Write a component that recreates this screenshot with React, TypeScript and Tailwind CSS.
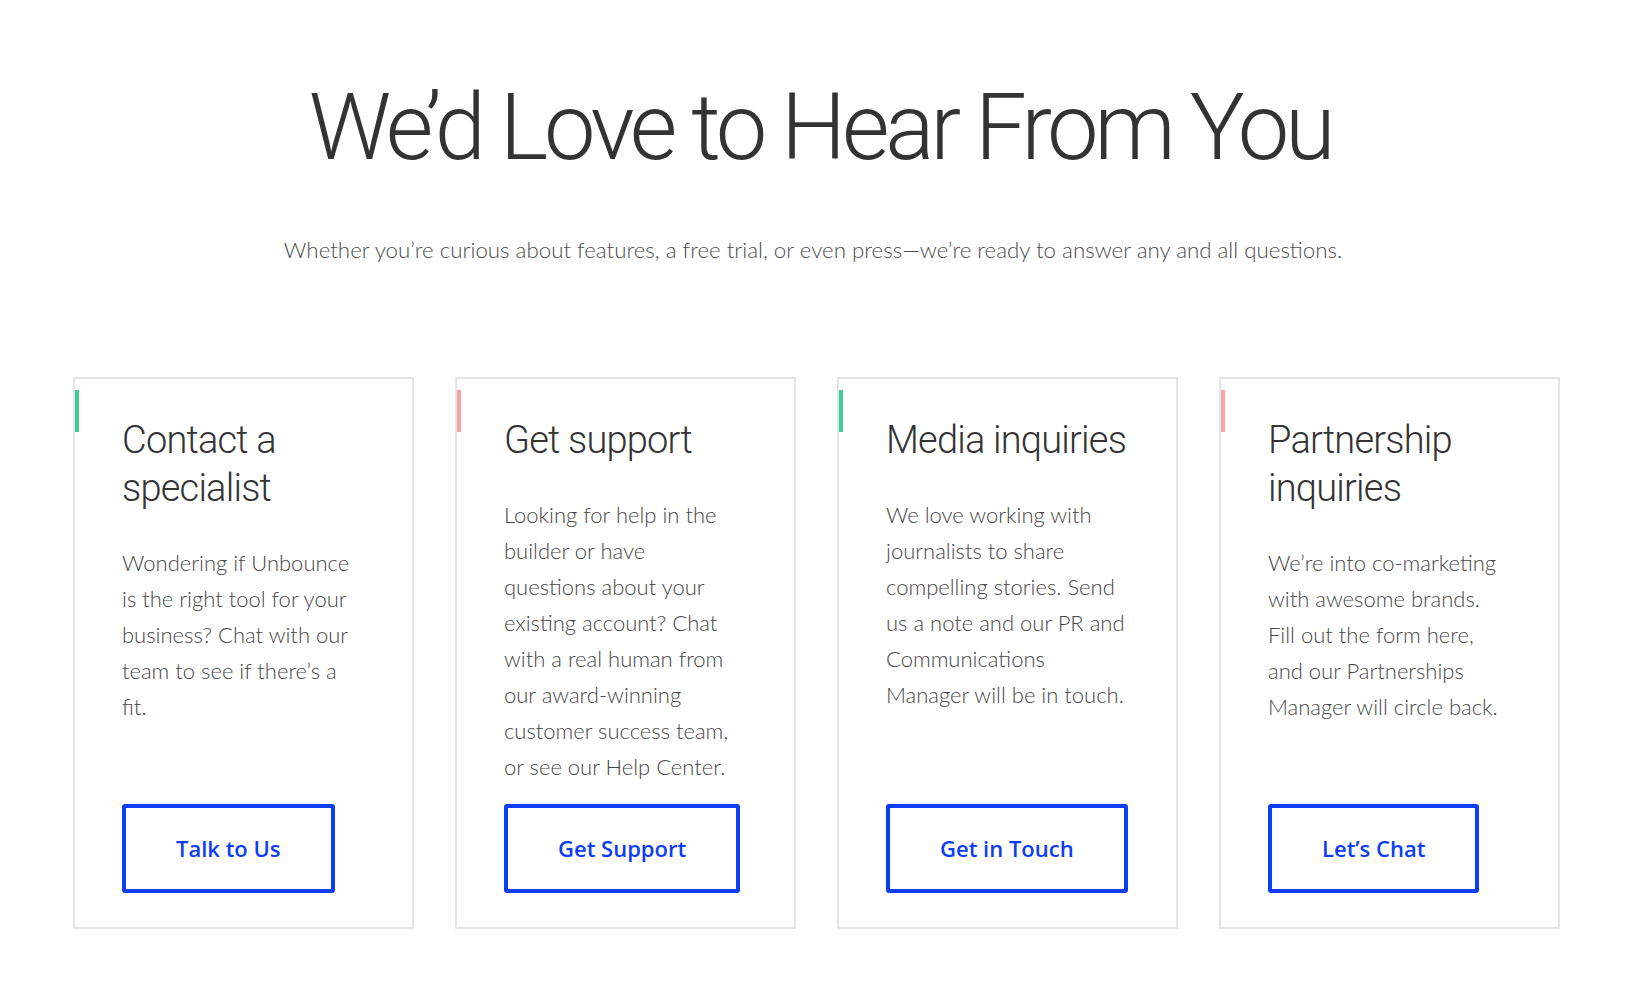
import React from "react";

const cards = [
  {
    title: ["Contact a", "specialist"],
    body: ["Wondering if Unbounce", "is the right tool for your", "business? Chat with our", "team to see if there’s a", "fit."],
    button: "Talk to Us",
    accent: "bg-[#3ccf91]",
  },
  {
    title: ["Get support"],
    body: ["Looking for help in the", "builder or have", "questions about your", "existing account? Chat", "with a real human from", "our award-winning", "customer success team,", "or see our Help Center."],
    button: "Get Support",
    accent: "bg-[#f7a3a5]",
  },
  {
    title: ["Media inquiries"],
    body: ["We love working with", "journalists to share", "compelling stories. Send", "us a note and our PR and", "Communications", "Manager will be in touch."],
    button: "Get in Touch",
    accent: "bg-[#3ccf91]",
  },
  {
    title: ["Partnership", "inquiries"],
    body: ["We’re into co-marketing", "with awesome brands.", "Fill out the form here,", "and our Partnerships", "Manager will circle back."],
    button: "Let’s Chat",
    accent: "bg-[#f7a3a5]",
  },
];

export default function App() {
  return (
    <div className="min-h-[992px] w-full bg-white">
      <div className="flex flex-col items-center pt-[72px]">
        <h1
          className="text-[92px] leading-[112px] text-[#333333] tracking-[-4.3px] pl-[14px]"
          style={{ fontFamily: '"Roboto", "Liberation Sans", sans-serif', fontWeight: 300 }}
        >
          We’d Love to Hear From You
        </h1>
        <p
          className="mt-[51px] text-[22.3px] leading-[30px] text-[#4d4d4d] font-light"
          style={{ fontFamily: 'Lato, "Liberation Sans", sans-serif' }}
        >
          Whether you’re curious about features, a free trial, or even press—we’re ready to answer any and all questions.
        </p>
      </div>
      <div className="mt-[112px] flex gap-[41px] pl-[73px]">
        {cards.map((c) => (
          <div
            key={c.button}
            className="relative flex h-[552px] w-[341px] flex-col border-2 border-[#e2e5e9] pl-[47px] pt-[37px] pb-[34px]"
          >
            <div className={`absolute left-0 top-[11px] h-[42px] w-[4px] ${c.accent}`} />
            <h2
              className="text-[38px] leading-[48px] text-[#333333] tracking-[-0.8px]"
              style={{ fontFamily: '"Roboto", "Liberation Sans", sans-serif', fontWeight: 300 }}
            >
              {c.title.map((t, i) => (
                <React.Fragment key={i}>
                  {t}
                  {i < c.title.length - 1 && <br />}
                </React.Fragment>
              ))}
            </h2>
            <p
              className="mt-[33px] text-[22px] leading-[36px] text-[#474747] font-light"
              style={{ fontFamily: 'Lato, "Liberation Sans", sans-serif' }}
            >
              {c.body.map((t, i) => (
                <React.Fragment key={i}>
                  {t}
                  {i < c.body.length - 1 && <br />}
                </React.Fragment>
              ))}
            </p>
            <div className="mt-auto">
              <button
                className="h-[89px] rounded-[3px] border-4 border-[#0d3df5] px-[50px] text-[22px] font-semibold text-[#0d3df5]"
                style={{ fontFamily: '"Open Sans", Lato, sans-serif' }}
              >
                {c.button}
              </button>
            </div>
          </div>
        ))}
      </div>
    </div>
  );
}
